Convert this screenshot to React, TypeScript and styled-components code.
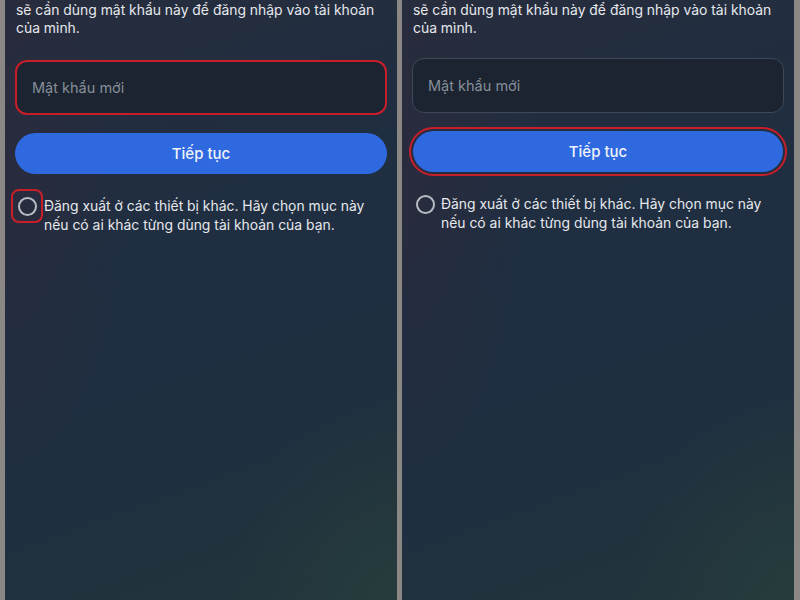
import styled, { createGlobalStyle } from 'styled-components'

const GlobalStyle = createGlobalStyle`
  html, body {
    margin: 0;
    padding: 0;
    background: #8a8784;
  }
  body {
    font-family: Inter, 'Noto Sans', sans-serif;
  }
`

const Screen = styled.div`
  display: flex;
  gap: 5px;
  height: 600px;
  padding: 0 6px 0 5px;
  box-sizing: border-box;
  overflow: hidden;
`

const Panel = styled.div`
  flex: 1;
  min-width: 0;
  padding: 0 10px;
  overflow: hidden;
  background:
    radial-gradient(ellipse 60% 50% at 100% 100%, rgba(40, 66, 60, 0.55), transparent 70%),
    radial-gradient(ellipse 45% 70% at 0% 30%, rgba(46, 42, 60, 0.6), transparent 70%),
    linear-gradient(160deg, #262d3d 0%, #1f2e41 40%, #1f2f40 70%, #23353b 100%);
  display: flex;
  flex-direction: column;
`

const Intro = styled.p`
  margin: 1px 0 0 1px;
  color: #e6e8ec;
  font-size: 13.9px;
  line-height: 18px;
  white-space: nowrap;
`

const InputBox = styled.div<{ $marked?: boolean }>`
  margin-top: ${p => (p.$marked ? '23px' : '21px')};
  height: 55px;
  box-sizing: border-box;
  border-radius: 12px;
  background: #1b2430;
  border: ${p => (p.$marked ? '2px solid #c81e2a' : '1px solid #3d4958')};
  display: flex;
  align-items: center;
  padding-left: 15px;
  color: #868e99;
  font-size: 14.5px;
`

const ButtonWrap = styled.div<{ $marked?: boolean }>`
  margin: ${p => (p.$marked ? '14px -3px 0' : '18px 0 0')};
  border-radius: 26px;
  border: ${p => (p.$marked ? '2px solid #c81e2a' : 'none')};
  padding: ${p => (p.$marked ? '2px' : '0')};
`

const Button = styled.button`
  width: 100%;
  height: 41px;
  border: none;
  border-radius: 22px;
  background: #2f69e0;
  color: #eef2fb;
  font-family: Inter, 'Noto Sans', sans-serif;
  font-size: 15px;
  font-weight: 500;
`

const CheckRow = styled.div<{ $marked?: boolean }>`
  margin-top: ${p => (p.$marked ? '23px' : '19px')};
  display: flex;
  align-items: flex-start;
  gap: 8px;
`

const RadioHolder = styled.div<{ $marked?: boolean }>`
  width: 32px;
  height: 34px;
  box-sizing: border-box;
  margin: -8px 0 0 ${p => (p.$marked ? '-4px' : '-3px')};
  border-radius: 8px;
  border: 2px solid ${p => (p.$marked ? '#c81e2a' : 'transparent')};
  display: flex;
  align-items: center;
  justify-content: center;
  flex-shrink: 0;
`

const Radio = styled.span`
  width: 15px;
  height: 15px;
  border-radius: 50%;
  border: 2px solid #b7bcc4;
`

const Label = styled.div<{ $marked?: boolean }>`
  margin-left: ${p => (p.$marked ? '-7px' : '-8px')};
  color: #e6e8ec;
  font-size: 13.9px;
  line-height: 19px;
  white-space: nowrap;
`

function Step({ marked }: { marked: 'input' | 'button' }) {
  return (
    <Panel>
      <Intro>
        sẽ cần dùng mật khẩu này để đăng nhập vào tài khoản
        <br />
        của mình.
      </Intro>
      <InputBox $marked={marked === 'input'}>Mật khẩu mới</InputBox>
      <ButtonWrap $marked={marked === 'button'}>
        <Button>Tiếp tục</Button>
      </ButtonWrap>
      <CheckRow $marked={marked === 'input'}>
        <RadioHolder $marked={marked === 'input'}>
          <Radio />
        </RadioHolder>
        <Label $marked={marked === 'input'}>
          Đăng xuất ở các thiết bị khác. Hãy chọn mục này
          <br />
          nếu có ai khác từng dùng tài khoản của bạn.
        </Label>
      </CheckRow>
    </Panel>
  )
}

export default function App() {
  return (
    <>
      <GlobalStyle />
      <Screen>
        <Step marked="input" />
        <Step marked="button" />
      </Screen>
    </>
  )
}
